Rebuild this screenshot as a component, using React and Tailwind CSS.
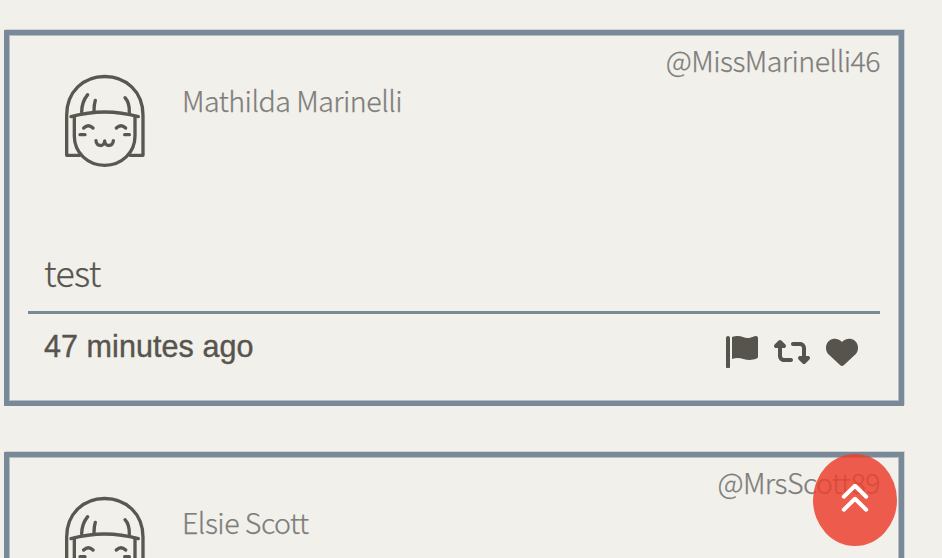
import { FaHeart, FaRetweet } from "react-icons/fa6";

const light = "font-['Noto_Sans_CJK_JP','Noto_Sans',sans-serif] font-light whitespace-nowrap [-webkit-text-stroke:0.25px_currentColor]";

function Avatar() {
  return (
    <svg viewBox="0 0 300 300" className="block size-[100px] shrink-0" fill="none" stroke="#5a5751" strokeWidth="10" strokeLinecap="round" strokeLinejoin="round">
      <path d="M74 256H35V136C35 64 86 19.500 149 19.500S264 64 264 136V256H225" />
      <path d="M58 140V198C58 248 98 286 149 286S240 248 240 198V140" />
      <path d="M48 140Q149 112 250 140" />
      <path d="M80 126Q80 96 98 74M117 122Q117 104 121 91M223 127Q224 98 210 83" />
      <path d="M86 174Q100 161 114 174M184 174Q198 161 212 174M75 194H90M209 194H223" />
      <path d="M123 212C124 231 148 231 149 213C150 231 174 231 175 212" />
    </svg>
  );
}

function FlagIcon() {
  return (
    <svg viewBox="0 0 512 512" className="size-8" fill="currentColor">
      <path d="M64 496C64 504.8 56.750 512 48 512h-32C7.250 512 0 504.8 0 496V32c0-17.750 14.250-32 32-32s32 14.250 32 32V496zM476.3 0c-6.365 0-13.010 1.350-19.340 4.233c-45.690 20.860-79.560 27.940-107.8 27.940c-59.960 0-94.810-31.860-163.9-31.870C160.9 .3055 131.6 4.867 96 15.750v350.5c32-9.984 59.870-14.100 84.850-14.100c73.630 0 124.9 31.780 198.6 31.780c31.910 0 68.020-5.971 111.1-23.090C504.1 355.9 512 344.4 512 332.100V30.730C512 11.100 495.3 0 476.3 0z" />
    </svg>
  );
}

function Post({ name, handle, text, time }) {
  return (
    <article className="h-[376px] w-[900px] shrink-0 border-5 border-[#7a8998] px-[19px] shadow-[inset_0_0_0_1px_#b4bcc3,1px_-1px_0_0_#cfd3d6]">
      <header className="flex h-[210px]">
        <div className="pl-[27px] pt-[35px]">
          <Avatar />
        </div>
        <div className={`${light} ml-[27px] pt-[45px] text-[28.6px] leading-[40px] tracking-[-0.52px] text-[#7e7e7c]`}>{name}</div>
        <div className={`${light} ml-auto pt-[5px] text-[28.6px] leading-[40px] tracking-[-0.55px] text-[#7e7e7c]`}>{handle}</div>
      </header>
      <p className={`${light} h-[69px] border-b-3 border-[#7a8998] pl-4 pt-[7px] text-[35.7px] leading-[40px] tracking-[-0.6px] text-[#57544e]`}>{text}</p>
      <footer className="flex items-start justify-between pl-4 pr-[22px] text-[#57544e]">
        <span className="pt-[14px] font-['Liberation_Sans',Arial,sans-serif] text-[30.5px] leading-[36px] tracking-[0.07px] [-webkit-text-stroke:0.4px_#57544e]">{time}</span>
        <span className="flex gap-4 pt-[22px]">
          <FlagIcon />
          <FaRetweet className="h-8 w-9" />
          <FaHeart className="size-8" />
        </span>
      </footer>
    </article>
  );
}

export default function App() {
  return (
    <main className="relative h-[558px] w-[942px] overflow-hidden bg-[#f2f0eb]">
      <div className="flex flex-col gap-[46px] pl-1 pt-[30px]">
        <Post name="Mathilda Marinelli" handle="@MissMarinelli46" text="test" time="47 minutes ago" />
        <Post name="Elsie Scott" handle="@MrsScott89" text="test" time="47 minutes ago" />
      </div>
      <button aria-label="Back to top" className="absolute left-[813px] top-[453.5px] flex h-[92.5px] w-[84px] items-center justify-center rounded-[50%] bg-[#eb412f]/85">
        <svg viewBox="0 0 30 32" className="h-8 w-[30px]" fill="none" stroke="white" strokeWidth="4" strokeLinecap="round" strokeLinejoin="round">
          <path d="M3.800 12.700L15 1.800L26.200 12.700M3.800 25.700L15 14.800L26.200 25.700" />
        </svg>
      </button>
    </main>
  );
}
